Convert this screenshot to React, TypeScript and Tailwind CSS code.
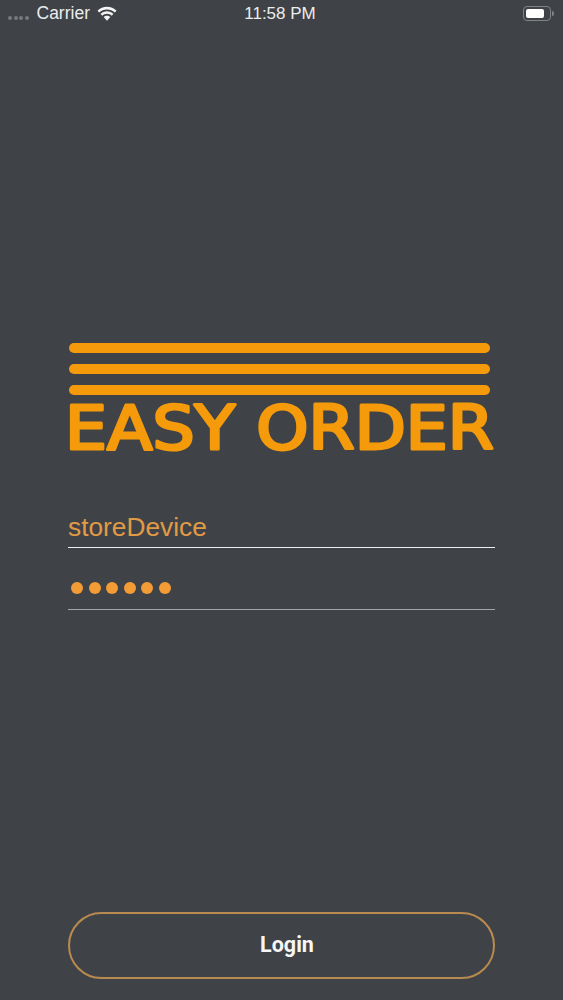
const ORANGE = '#f59b0b';

function StatusBar() {
  return (
    <div className="flex h-[27px] items-center justify-between pl-2 pr-[9px] text-[#eceded] font-['Liberation_Sans',sans-serif]">
      <div className="flex w-[150px] items-center">
        <div className="mt-[9px] flex gap-[1.5px]">
          {[0, 1, 2, 3].map(i => (
            <span key={i} className="h-[4px] w-[4px] rounded-full bg-[#777a7d]" />
          ))}
        </div>
        <span className="ml-[8px] text-[17.5px]">Carrier</span>
        <svg className="ml-[6px]" width="22" height="16" viewBox="0 0 20 15" fill="#f4f4f4">
          <path d="M10 3.200c2.800 0 5.400 1.100 7.300 3l1.600-1.700C16.600 2.200 13.400.8 10 .8S3.400 2.200 1.100 4.500l1.600 1.700c1.900-1.900 4.500-3 7.300-3z" />
          <path d="M10 7.300c1.700 0 3.200.7 4.400 1.800l1.600-1.700C14.400 5.900 12.300 5 10 5s-4.400.9-6 2.400l1.600 1.700C6.800 8 8.300 7.300 10 7.300z" />
          <path d="M10 9.200c-1.200 0-2.300.5-3.100 1.200L10 13.800l3.100-3.400c-.8-.7-1.900-1.200-3.100-1.200z" />
        </svg>
      </div>
      <span className="ml-[-2px] text-[17px]">11:58 PM</span>
      <div className="flex w-[150px] items-center justify-end">
        <div className="flex h-[15px] w-[28px] items-center rounded-[4px] border border-[#808386] p-[2px]">
          <div className="h-full w-[18px] rounded-[2px] bg-white" />
        </div>
        <div className="ml-[1px] h-[5px] w-[1.5px] rounded-r-full bg-[#808386]" />
      </div>
    </div>
  );
}

function Logo() {
  return (
    <svg width="427" height="110" viewBox="0 0 427 110" className="block overflow-visible">
      {[0, 21, 42].map(y => (
        <rect key={y} x="1" y={y} width="421" height="10" rx="5" fill={ORANGE} />
      ))}
      <text
        x="-3"
        y="106"
        textLength="429"
        lengthAdjust="spacingAndGlyphs"
        fontFamily="'DejaVu Sans', sans-serif"
        fontSize="61"
        fill={ORANGE}
        stroke={ORANGE}
        strokeWidth="3"
        strokeLinejoin="round"
      >
        EASY ORDER
      </text>
    </svg>
  );
}

export default function App() {
  return (
    <div className="flex h-[1000px] w-[563px] flex-col overflow-hidden bg-[#3f4347]">
      <StatusBar />
      <div className="flex flex-1 flex-col px-[68px]">
        <div className="mt-[316px]">
          <Logo />
        </div>
        <div className="mt-[45px] flex h-[50px] items-center border-b border-[#eeeeee] pt-[10px] font-['Liberation_Sans',sans-serif] text-[26.3px] text-[#e29a45]">
          storeDevice
        </div>
        <div className="flex h-[62px] items-center gap-[5.5px] border-b border-[#a3a5a7] pl-[3px] pt-[18px]">
          {[0, 1, 2, 3, 4, 5].map(i => (
            <span key={i} className="h-[12px] w-[12px] rounded-full bg-[#f39c35]" />
          ))}
        </div>
        <button className="mt-[302px] flex h-[67px] w-full items-center justify-center rounded-full border-2 border-[#b98a50] pl-[11px] font-['Roboto',sans-serif] text-[21.5px] font-bold text-[#f6f6f6]">
          Login
        </button>
      </div>
    </div>
  );
}
